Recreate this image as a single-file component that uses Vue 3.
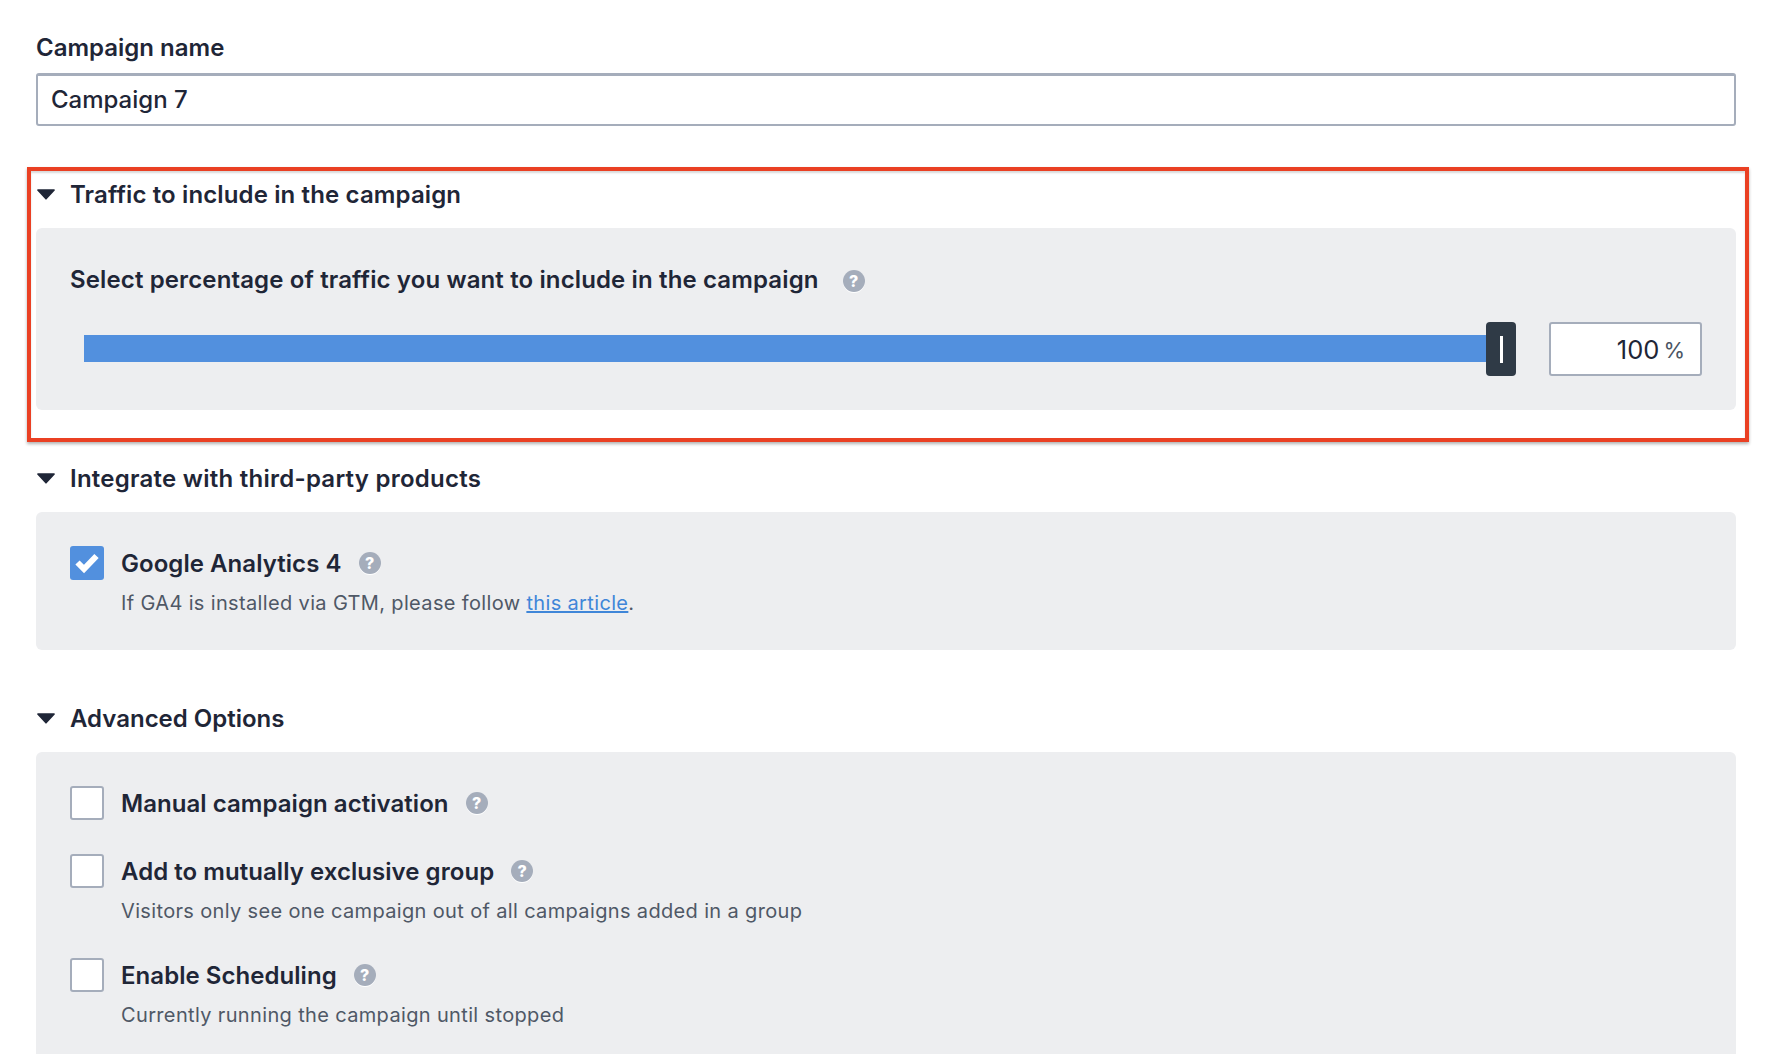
<script setup>
const caret = 'M.9 .2h16.2a.8.8 0 0 1 .6 1.35L9.6 10.3a.8.8 0 0 1-1.2 0L.3 1.55A.8.8 0 0 1 .9 .2z'
const advanced = [
  { label: 'Manual campaign activation' },
  { label: 'Add to mutually exclusive group', desc: 'Visitors only see one campaign out of all campaigns added in a group' },
  { label: 'Enable Scheduling', desc: 'Currently running the campaign until stopped' }
]
</script>

<template>
  <div class="page">
    <label class="name-label">Campaign name</label>
    <input class="name-input" value="Campaign 7" readonly />

    <section class="section first">
      <div class="red-box"></div>
      <h3 class="heading"><svg class="caret" viewBox="0 0 18 11"><path :d="caret" /></svg>Traffic to include in the campaign</h3>
      <div class="panel traffic">
        <div class="title-row">
          <span class="label wide">Select percentage of traffic you want to include in the campaign</span>
          <span class="help title-help">?</span>
        </div>
        <div class="slider-row">
          <div class="slider">
            <div class="track"></div>
            <div class="thumb"><i></i></div>
          </div>
          <div class="percent"><span class="num">100</span><span class="sign">%</span></div>
        </div>
      </div>
    </section>

    <section class="section second">
      <h3 class="heading h-wide"><svg class="caret" viewBox="0 0 18 11"><path :d="caret" /></svg>Integrate with third-party products</h3>
      <div class="panel integrate">
        <div class="option">
          <span class="check on">
            <svg viewBox="0 0 34 34"><path d="M7.5 16.5l6.5 6.5L26.5 10" fill="none" stroke="#fff" stroke-width="6" /></svg>
          </span>
          <div class="body">
            <div class="option-head"><span class="label">Google Analytics 4</span><span class="help">?</span></div>
            <p class="desc">If GA4 is installed via GTM, please follow <a href="#" class="link">this article</a>.</p>
          </div>
        </div>
      </div>
    </section>

    <section class="section third">
      <h3 class="heading h-tight"><svg class="caret" viewBox="0 0 18 11"><path :d="caret" /></svg>Advanced Options</h3>
      <div class="panel advanced">
        <div class="option" v-for="o in advanced" :key="o.label">
          <span class="check"></span>
          <div class="body">
            <div class="option-head"><span class="label">{{ o.label }}</span><span class="help">?</span></div>
            <p v-if="o.desc" class="desc">{{ o.desc }}</p>
          </div>
        </div>
      </div>
    </section>
  </div>
</template>

<style>
html, body { margin: 0; overflow: hidden; background: #fff; }
</style>

<style scoped>
.page {
  box-sizing: border-box;
  height: 1054px;
  overflow: hidden;
  padding: 34px 44px 0 36px;
  font-family: Inter, "Noto Sans", sans-serif;
  color: #1f2637;
}
.name-label {
  display: block;
  font-size: 24px;
  line-height: 28px;
  font-weight: 600;
  margin-bottom: 11px;
}
.name-input {
  display: block;
  box-sizing: border-box;
  width: 100%;
  height: 53px;
  border: 2px solid #a5adbb;
  border-top-width: 3px;
  border-radius: 3px;
  padding: 0 13px 2px;
  font: 500 24px Inter, "Noto Sans", sans-serif;
  color: #1f2637;
  background: #fff;
  outline: none;
}
.section { position: relative; }
.section.first { margin-top: 55px; }
.section.second { margin-top: 55px; }
.section.third { margin-top: 55px; }
.red-box {
  position: absolute;
  left: -9px;
  right: -13px;
  top: -14px;
  bottom: -32px;
  border: 4px solid #ea4023;
  box-shadow: 0 2px 3px rgba(0, 0, 0, .3), inset 0 2px 2px rgba(0, 0, 0, .15);
  pointer-events: none;
}
.heading {
  margin: 0 0 19px;
  display: flex;
  align-items: center;
  font-size: 24px;
  line-height: 28px;
  font-weight: 600;
  letter-spacing: .13px;
}
.h-wide { letter-spacing: .25px; }
.h-tight { letter-spacing: 0; }
.caret { flex: none; width: 18px; height: 11px; margin: -2px 15px 0 1px; fill: #1f2637; }
.panel {
  background: #edeef0;
  border-radius: 6px;
  padding: 34px;
}
.traffic { padding: 38px 34px 34px; }
.integrate { height: 138px; box-sizing: border-box; }
.advanced { padding-bottom: 80px; }
.title-row { display: flex; align-items: center; height: 28px; }
.label { font-size: 24px; line-height: 28px; font-weight: 600; position: relative; top: 1px; letter-spacing: .05px; }
.label.wide { letter-spacing: .13px; top: 0; }
.help {
  display: inline-flex;
  align-items: center;
  justify-content: center;
  width: 22px;
  height: 22px;
  margin-left: 17px;
  border-radius: 50%;
  background: #a5adbb;
  box-shadow: 0 1px 0 #fff;
  color: #fff;
  font-size: 16px;
  font-weight: 800;
  line-height: 22px;
  flex: none;
}
.title-help { margin-left: 24px; position: relative; top: 1px; }
.slider-row { display: flex; align-items: center; margin-top: 28px; height: 54px; }
.slider { position: relative; flex: 1; height: 54px; margin: 0 33px 0 14px; }
.track { position: absolute; left: 0; right: 26px; top: 13px; height: 27px; background: #5290de; }
.thumb {
  position: absolute;
  right: 0;
  top: 0;
  width: 30px;
  height: 54px;
  border-radius: 4px;
  background: #2f3a46;
  display: flex;
  align-items: center;
  justify-content: center;
}
.thumb i { display: block; width: 3px; height: 27px; background: #fff; }
.percent {
  box-sizing: border-box;
  width: 153px;
  height: 54px;
  border: 2px solid #a5adbb;
  border-radius: 3px;
  background: #fff;
  display: flex;
  align-items: center;
  justify-content: flex-end;
  padding-right: 15px;
}
.num { font-size: 25.5px; }
.sign { font-size: 22px; margin-left: 4px; color: #4b5563; position: relative; top: 1px; }
.option { display: flex; margin-bottom: 34px; }
.integrate .option { margin: 0; }
.check {
  box-sizing: border-box;
  flex: none;
  width: 34px;
  height: 34px;
  border: 2px solid #a5adbb;
  border-radius: 3px;
  background: #fff;
  margin-right: 17px;
}
.check.on { border: none; background: #5290de; }
.check svg { display: block; width: 34px; height: 34px; }
.option-head { display: flex; align-items: center; height: 34px; }
.desc {
  margin: 10px 0 0;
  font-size: 20px;
  line-height: 26px;
  letter-spacing: .35px;
  color: #4f5866;
}
.link { color: #3f86d8; text-decoration: underline; }
</style>
